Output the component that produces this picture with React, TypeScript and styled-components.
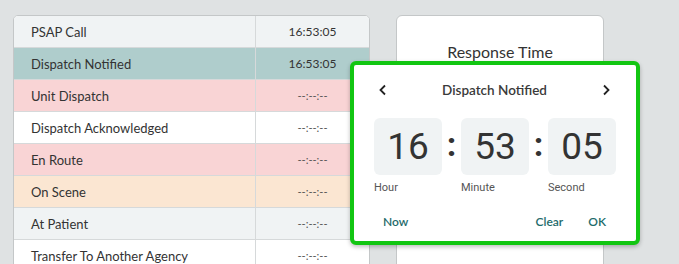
import React from 'react';
import styled, { createGlobalStyle } from 'styled-components';

const GlobalStyle = createGlobalStyle`
  html, body {
    margin: 0;
    padding: 0;
    background: #dfe2e3;
    font-family: Lato, "Noto Sans", sans-serif;
    color: #333;
  }
`;

const Page = styled.div`
  position: relative;
  width: 679px;
  height: 264px;
  overflow: hidden;
  display: flex;
  align-items: flex-start;
  gap: 26px;
  padding: 15px 0 0 13px;
  box-sizing: border-box;
`;

const TableCard = styled.div`
  width: 357px;
  flex: none;
  background: #fff;
  border: 1px solid #c4c7c8;
  border-radius: 5px;
  overflow: hidden;
  box-sizing: border-box;
`;

const Row = styled.div<{ $bg: string }>`
  display: grid;
  grid-template-columns: 242px 1fr;
  height: 32px;
  background: ${({ $bg }) => $bg};
  border-bottom: 1px solid #d6d9da;
  box-sizing: border-box;
`;

const Label = styled.div`
  display: flex;
  align-items: center;
  padding-left: 17px;
  font-size: 13px;
  color: #333;
  border-right: 1px solid #d6d9da;
`;

const Time = styled.div<{ $empty?: boolean }>`
  display: flex;
  align-items: center;
  justify-content: center;
  font-size: ${({ $empty }) => ($empty ? '11px' : '12px')};
  color: ${({ $empty }) => ($empty ? '#555' : '#333')};
`;

const ResponseCard = styled.div`
  width: 208px;
  height: 270px;
  flex: none;
  background: #fff;
  border: 1px solid #c4c7c8;
  border-radius: 6px;
  box-sizing: border-box;
  padding-top: 26px;
  text-align: center;
  font-size: 16px;
  color: #333;
`;

const Popup = styled.div`
  position: absolute;
  left: 350px;
  top: 61px;
  width: 290px;
  height: 184px;
  box-sizing: border-box;
  background: #fff;
  border: 4px solid #12c612;
  border-radius: 6px;
  box-shadow: 0 2px 4px rgba(0, 0, 0, 0.25);
  padding: 0 20px;
  display: flex;
  flex-direction: column;
`;

const Header = styled.div`
  display: flex;
  align-items: center;
  justify-content: space-between;
  height: 50px;
  padding: 0 4px 0 3px;
`;

const Arrow = styled.button`
  width: 12px;
  height: 16px;
  padding: 0;
  border: none;
  background: none;
  display: flex;
  align-items: center;
  justify-content: center;
  color: #222;
`;

const Title = styled.div`
  font-size: 13.5px;
  font-weight: 600;
  color: #3a3a3a;
`;

const Fields = styled.div`
  display: flex;
  align-items: flex-start;
  margin-top: 3px;
`;

const Field = styled.div`
  display: flex;
  flex-direction: column;
  width: 68px;
`;

const Digit = styled.div`
  height: 57px;
  border-radius: 6px;
  background: #f0f3f4;
  display: flex;
  align-items: center;
  justify-content: center;
  font-family: Roboto, "Noto Sans", sans-serif;
  font-size: 37px;
  color: #333;
`;

const Colon = styled.div`
  width: 19px;
  height: 57px;
  display: flex;
  align-items: center;
  justify-content: center;
  font-family: Roboto, sans-serif;
  font-size: 34px;
  font-weight: 700;
  color: #333;
  padding-bottom: 6px;
  box-sizing: border-box;
`;

const FieldLabel = styled.div`
  margin-top: 6px;
  font-family: Roboto, "Noto Sans", sans-serif;
  font-size: 11px;
  color: #555;
`;

const Actions = styled.div`
  display: flex;
  align-items: center;
  gap: 6px;
  margin-top: 16px;
`;

const ActionButton = styled.button`
  border: none;
  background: none;
  padding: 4px 10px 4px 9px;
  font-family: Lato, sans-serif;
  font-size: 12px;
  font-weight: 600;
  color: #1e6b6b;
`;

const Spacer = styled.div`
  flex: 1;
`;

const rows = [
  { label: 'PSAP Call', time: '16:53:05', bg: '#f0f3f4' },
  { label: 'Dispatch Notified', time: '16:53:05', bg: '#afcdcc' },
  { label: 'Unit Dispatch', time: '', bg: '#f9d4d5' },
  { label: 'Dispatch Acknowledged', time: '', bg: '#ffffff' },
  { label: 'En Route', time: '', bg: '#f9d4d5' },
  { label: 'On Scene', time: '', bg: '#fbe6d2' },
  { label: 'At Patient', time: '', bg: '#f0f3f4' },
  { label: 'Transfer To Another Agency', time: '', bg: '#ffffff' },
];

function Chevron({ dir }: { dir: 'left' | 'right' }) {
  return (
    <svg width="10" height="12" viewBox="0 0 10 12">
      <path
        d={dir === 'left' ? 'M7 1.5 L2.5 6 L7 10.5' : 'M3 1.5 L7.5 6 L3 10.5'}
        fill="none"
        stroke="currentColor"
        strokeWidth="1.8"
      />
    </svg>
  );
}

export default function App() {
  const fields = [
    { value: '16', label: 'Hour' },
    { value: '53', label: 'Minute' },
    { value: '05', label: 'Second' },
  ];

  return (
    <Page>
      <GlobalStyle />
      <TableCard>
        {rows.map(row => (
          <Row key={row.label} $bg={row.bg}>
            <Label>{row.label}</Label>
            <Time $empty={!row.time}>{row.time || '--:--:--'}</Time>
          </Row>
        ))}
      </TableCard>
      <ResponseCard>Response Time</ResponseCard>

      <Popup>
        <Header>
          <Arrow>
            <Chevron dir="left" />
          </Arrow>
          <Title>Dispatch Notified</Title>
          <Arrow>
            <Chevron dir="right" />
          </Arrow>
        </Header>
        <Fields>
          {fields.map((field, i) => (
            <React.Fragment key={field.label}>
              {i > 0 && <Colon>:</Colon>}
              <Field>
                <Digit>{field.value}</Digit>
                <FieldLabel>{field.label}</FieldLabel>
              </Field>
            </React.Fragment>
          ))}
        </Fields>
        <Actions>
          <ActionButton>Now</ActionButton>
          <Spacer />
          <ActionButton>Clear</ActionButton>
          <ActionButton>OK</ActionButton>
        </Actions>
      </Popup>
    </Page>
  );
}
